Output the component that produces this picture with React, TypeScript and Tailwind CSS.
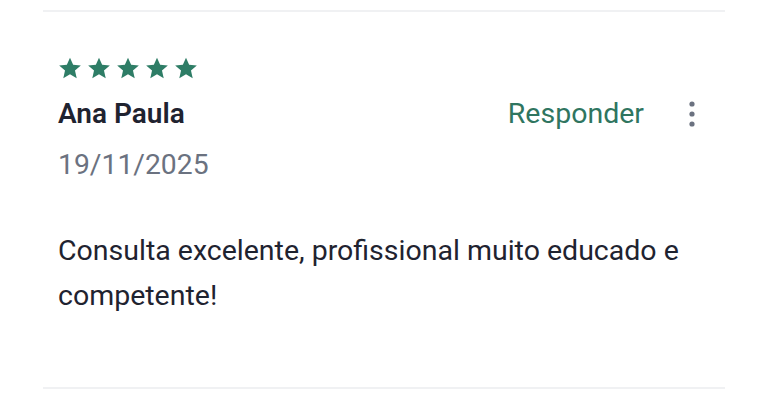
import React from "react";

const Star = () => (
  <svg viewBox="0 0 24 24" className="w-[26px] h-[26px] fill-[#2e7d66]">
    <path d="M12 2.5l2.9 6.6 7.1.6-5.4 4.7 1.6 7-6.2-3.7-6.2 3.7 1.6-7L2 9.7l7.1-.6z" />
  </svg>
);

const App = () => {
  return (
    <div className="w-full h-[401px] bg-white pt-[10px] font-['Roboto',sans-serif]">
      <div className="mx-[43px] border-t-2 border-b-2 border-[#f0f1f3] h-[379px]">
        <div className="pl-[15px] pr-[30px] pt-[43px]">
          <div className="flex gap-[3px] -ml-[1px]">
            <Star />
            <Star />
            <Star />
            <Star />
            <Star />
          </div>
          <div className="flex items-center justify-between mt-[15px] h-[36px]">
            <span className="text-[28px] font-semibold text-[#1f2330]">Ana Paula</span>
            <div className="flex items-center gap-[45px]">
              <span className="text-[28.5px] text-[#2f7560]">Responder</span>
              <svg viewBox="0 0 6 26" className="w-[6px] h-[26px] fill-[#6b7280]">
                <circle cx="3" cy="3" r="2.6" />
                <circle cx="3" cy="13" r="2.6" />
                <circle cx="3" cy="23" r="2.6" />
              </svg>
            </div>
          </div>
          <div className="mt-[15px] text-[28.3px] text-[#6b7280] leading-[36px]">19/11/2025</div>
          <p className="mt-[45px] text-[28.5px] leading-[45px] text-[#1f2330] max-w-[640px]">
            Consulta excelente, profissional muito educado e competente!
          </p>
        </div>
      </div>
    </div>
  );
};

export default App;
